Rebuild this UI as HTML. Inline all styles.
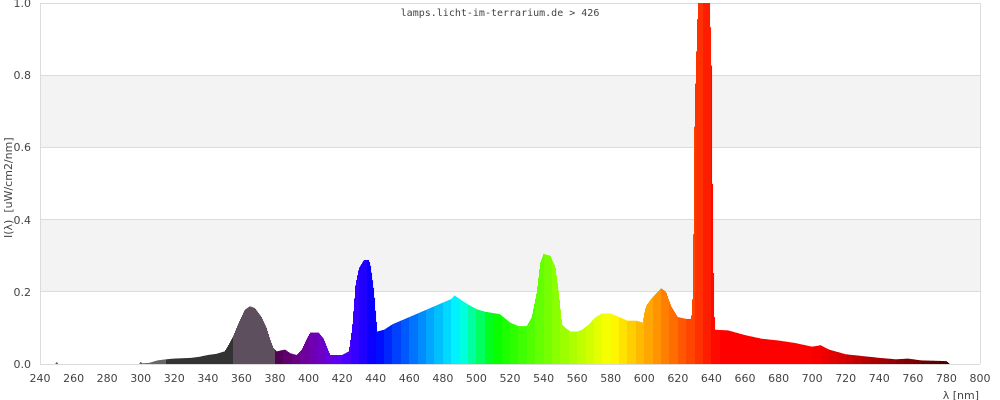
<!DOCTYPE html>
<html><head><meta charset="utf-8">
<style>
html,body{margin:0;padding:0;background:#fff;width:1000px;height:400px;overflow:hidden}
svg{display:block}
text{font-family:"DejaVu Sans","Liberation Sans",sans-serif;font-size:11px;fill:#444}
</style></head><body>
<svg id="s" width="1000" height="400" viewBox="0 0 1000 400" xmlns="http://www.w3.org/2000/svg">
<rect x="40" y="75.2" width="940" height="72.2" fill="#f3f3f3"/>
<rect x="40" y="219.6" width="940" height="72.2" fill="#f3f3f3"/>
<g stroke="#dcdcdc" stroke-width="1">
<line x1="40" x2="980" y1="75.5" y2="75.5"/>
<line x1="40" x2="980" y1="147.5" y2="147.5"/>
<line x1="40" x2="980" y1="219.5" y2="219.5"/>
<line x1="40" x2="980" y1="291.5" y2="291.5"/>
<line x1="40" x2="980" y1="3.5" y2="3.5"/>
<line x1="980.5" x2="980.5" y1="3" y2="364"/>
<line x1="40.5" x2="40.5" y1="3" y2="364"/>
<line x1="40" x2="980" y1="364.5" y2="364.5"/>
</g>
<g id="spec"></g>
<g text-anchor="end">
<text x="31" y="368">0.0</text>
<text x="31" y="296">0.2</text>
<text x="31" y="224">0.4</text>
<text x="31" y="151">0.6</text>
<text x="31" y="79">0.8</text>
<text x="31" y="7">1.0</text>
</g>
<g id="xl" text-anchor="middle"></g>
<text x="979" y="399" text-anchor="end">λ [nm]</text>
<text transform="translate(12,238) rotate(-90)" xml:space="preserve">I(λ)  [uW/cm2/nm]</text>
<text x="500" y="16" text-anchor="middle" style="font-family:'DejaVu Sans Mono','Liberation Mono',monospace;font-size:10px">lamps.licht-im-terrarium.de &gt; 426</text>
</svg>
<script>
var P=[[249,0],[250,0.006],[251,0],[299,0],[300,0.006],[301,0.002],[305,0.003],[310,0.01],[315,0.013],[320,0.015],[330,0.017],[335,0.02],[340,0.025],[345,0.028],[350,0.035],[352,0.05],[355,0.076],[358,0.11],[362,0.15],[365,0.16],[368,0.155],[372,0.13],[375,0.1],[377,0.07],[379,0.045],[381,0.035],[386,0.04],[389,0.03],[393,0.025],[396,0.04],[399,0.07],[401,0.087],[406,0.087],[409,0.07],[412,0.035],[413,0.025],[420,0.025],[424,0.035],[426,0.1],[428,0.22],[430,0.265],[433,0.288],[436,0.288],[437,0.27],[439,0.2],[440,0.14],[441,0.09],[445,0.095],[450,0.11],[460,0.13],[470,0.15],[480,0.17],[485,0.18],[487,0.19],[490,0.18],[495,0.165],[500,0.152],[505,0.145],[514,0.138],[520,0.115],[525,0.105],[530,0.105],[533,0.13],[536,0.2],[538,0.28],[540,0.305],[544,0.3],[547,0.27],[549,0.2],[551,0.11],[553,0.1],[556,0.09],[560,0.09],[563,0.095],[567,0.11],[571,0.13],[575,0.14],[580,0.14],[585,0.13],[590,0.12],[595,0.12],[599,0.115],[600,0.14],[601,0.16],[604,0.18],[608,0.2],[610,0.21],[613,0.2],[616,0.16],[620,0.13],[625,0.125],[628,0.125],[629,0.2],[630,0.7],[632,1.0],[639,1.0],[640,0.85],[641,0.3],[642,0.095],[650,0.093],[660,0.08],[670,0.07],[680,0.065],[690,0.058],[700,0.048],[705,0.052],[710,0.04],[720,0.027],[730,0.022],[740,0.017],[750,0.013],[757,0.015],[765,0.01],[780,0.008],[782,0.0]];
function val(n){for(var i=0;i<P.length-1;i++){if(n>=P[i][0]&&n<=P[i+1][0]){var t=(n-P[i][0])/(P[i+1][0]-P[i][0]);return P[i][1]+t*(P[i+1][1]-P[i][1]);}}return 0;}
function col(w){var r,g,b;
if(w<313)return"#666";if(w<353)return"#333";if(w<380)return"#5e4f5f";
if(w<440){r=-(w-440)/60;g=0;b=1;}else if(w<490){r=0;g=(w-440)/50;b=1;}else if(w<510){r=0;g=1;b=-(w-510)/20;}else if(w<580){r=(w-510)/70;g=1;b=0;}else if(w<645){r=1;g=-(w-645)/65;b=0;}else{r=1;g=0;b=0;}
var f=1;if(w<420)f=0.3+0.7*(w-380)/40;else if(w>700)f=0.3+0.7*(780-w)/80;
function c(x){return Math.round(255*x*f);}
return"rgb("+c(r)+","+c(g)+","+c(b)+")";}
var k=940/560,s="",g=document.getElementById("spec");
for(var x=40;x<980;x++){var n=240+(x-40+0.5)/k;var v=val(n);if(v<=0)continue;var h=v*361;var band=Math.floor(n/5)*5+2.5;
s+='<rect x="'+x+'" y="'+(364-h).toFixed(1)+'" width="1.05" height="'+h.toFixed(1)+'" fill="'+col(band)+'"/>';}
g.innerHTML=s;
var xl="";for(var n=240;n<=800;n+=20){xl+='<text x="'+(40+(n-240)*k).toFixed(1)+'" y="382">'+n+'</text>';}
document.getElementById("xl").innerHTML=xl;
</script>
</body></html>
